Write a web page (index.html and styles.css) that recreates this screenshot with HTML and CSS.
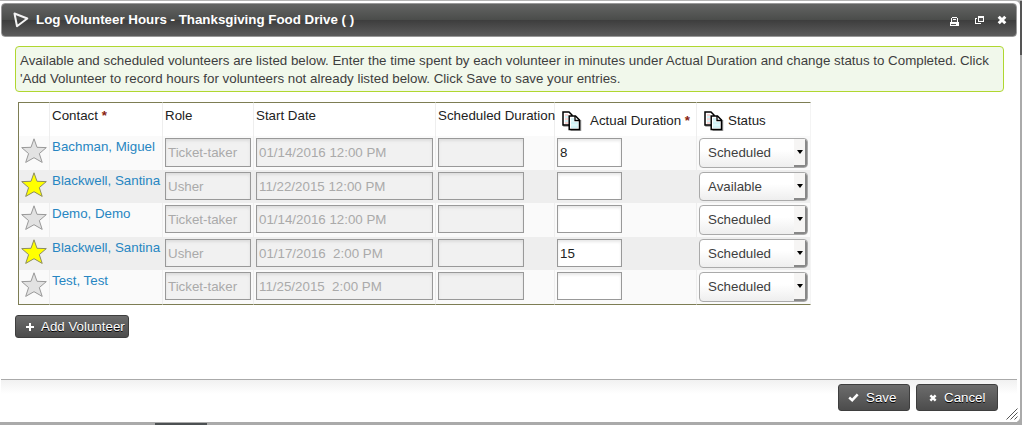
FILE: index.html
```html
<!DOCTYPE html>
<html lang="en">
<head>
<meta charset="utf-8">
<title>Log Volunteer Hours</title>
<link rel="stylesheet" href="styles.css">
</head>
<body>
<svg class="defs" width="0" height="0">
  <symbol id="star" viewBox="0 0 26 25"><path d="M13 .8 16 9.3 25.3 9.6 18.3 15.6 21.2 24.4 13 19.7 4.7 24.4 7.6 15.6 .7 9.6 10 9.3Z"/></symbol>
  <symbol id="copy" viewBox="0 0 20 20">
    <path d="M2 3v12h6M18.5 9v10.5H8.500" fill="none" stroke="#999" stroke-width="1.500"/>
    <path d="M1 1h6l3 3v10H1Z" fill="#fff" stroke="#000" stroke-width="1.500"/>
    <path d="M3 4h3M3 8h3M3 12h3" stroke="#f0aaaa"/><path d="M3 6h3M3 10h3" stroke="#a4e4ec"/>
    <path d="M7.200 5h6.300l4 4v9.500H7.200Z" fill="#fff" stroke="#000" stroke-width="1.500"/>
    <path d="M13 5v4.500h4.500" fill="none" stroke="#000" stroke-width="1.300"/>
    <path d="M9 8h3M9 12h7M9 16h7" stroke="#a4e4ec"/><path d="M9 10h3M9 14h7" stroke="#bdeef2"/>
  </symbol>
  <symbol id="cross" viewBox="0 0 10 10"><path d="M1.700 1.700 8.300 8.300M8.300 1.700 1.700 8.300" stroke="#fff" stroke-width="3"/></symbol>
</svg>
<div class="page">
  <div class="thumb"></div>
  <div class="dialog">
    <div class="titlebar">
      <svg class="logo" width="16" height="16" viewBox="0 0 16 16"><path d="M1.500 1.500 14.300 6.500 4 14.200Z" fill="none" stroke="#f3f3f3" stroke-width="2" stroke-linejoin="round"/></svg>
      <h1 class="title">Log Volunteer Hours - Thanksgiving Food Drive ( )</h1>
      <svg class="print" width="9" height="9" viewBox="0 0 9 9" shape-rendering="crispEdges"><path d="M2 0h5v1h1v4h1v4H0V5h1V1h1Z" fill="#fff"/><path d="M2 1h5v4H2ZM1 7h5v1H1Z" fill="#555"/><path d="M3 2h3v1H3Z" fill="#fff"/></svg>
      <svg class="popout" width="9" height="8" viewBox="0 0 9 8" shape-rendering="crispEdges"><path d="M3 0h6v6H3ZM0 2h2v1H1v4h4V7h1v1H0Z" fill="#fff"/><path d="M4 2h4v3H4Z" fill="#555"/></svg>
      <svg class="close" width="10" height="10"><use href="#cross"/></svg>
    </div>
    <div class="content">
      <div class="help"><div class="line l1">Available and scheduled volunteers are listed below. Enter the time spent by each volunteer in minutes under Actual Duration and change status to Completed. Click</div><div class="line">'Add Volunteer to record hours for volunteers not already listed below. Click Save to save your entries.</div></div>
      <div class="grid">
        <div class="row head">
          <div class="cell"></div><div class="cell">Contact <b class="req">*</b></div><div class="cell">Role</div><div class="cell">Start Date</div><div class="cell">Scheduled Duration</div>
          <div class="cell iconic wide"><svg width="20" height="20"><use href="#copy"/></svg><span>Actual Duration <b class="req">*</b></span></div>
          <div class="cell iconic"><svg width="20" height="20"><use href="#copy"/></svg><span>Status</span></div>
        </div>
        <div class="row tall">
          <div class="cell"><svg class="star" width="26" height="25"><use href="#star"/></svg></div><div class="cell name">Bachman, Miguel</div>
          <div class="cell"><div class="field off">Ticket-taker</div></div><div class="cell"><div class="field off">01/14/2016 12:00 PM</div></div><div class="cell"><div class="field off short"></div></div><div class="cell"><div class="field num">8</div></div><div class="cell"><div class="select">Scheduled<i class="drop"></i></div></div>
        </div>
        <div class="row even">
          <div class="cell"><svg class="star on" width="26" height="25"><use href="#star"/></svg></div><div class="cell name">Blackwell, Santina</div>
          <div class="cell"><div class="field off">Usher</div></div><div class="cell"><div class="field off">11/22/2015 12:00 PM</div></div><div class="cell"><div class="field off short"></div></div><div class="cell"><div class="field num"></div></div><div class="cell"><div class="select">Available<i class="drop"></i></div></div>
        </div>
        <div class="row mid">
          <div class="cell"><svg class="star" width="26" height="25"><use href="#star"/></svg></div><div class="cell name">Demo, Demo</div>
          <div class="cell"><div class="field off">Ticket-taker</div></div><div class="cell"><div class="field off">01/14/2016 12:00 PM</div></div><div class="cell"><div class="field off short"></div></div><div class="cell"><div class="field num"></div></div><div class="cell"><div class="select">Scheduled<i class="drop"></i></div></div>
        </div>
        <div class="row even">
          <div class="cell"><svg class="star on" width="26" height="25"><use href="#star"/></svg></div><div class="cell name">Blackwell, Santina</div>
          <div class="cell"><div class="field off">Usher</div></div><div class="cell"><div class="field off">01/17/2016&nbsp; 2:00 PM</div></div><div class="cell"><div class="field off short"></div></div><div class="cell"><div class="field num">15</div></div><div class="cell"><div class="select">Scheduled<i class="drop"></i></div></div>
        </div>
        <div class="row mid last">
          <div class="cell"><svg class="star" width="26" height="25"><use href="#star"/></svg></div><div class="cell name">Test, Test</div>
          <div class="cell"><div class="field off">Ticket-taker</div></div><div class="cell"><div class="field off">11/25/2015&nbsp; 2:00 PM</div></div><div class="cell"><div class="field off short"></div></div><div class="cell"><div class="field num"></div></div><div class="cell"><div class="select">Scheduled<i class="drop"></i></div></div>
        </div>
      </div>
      <div class="button add"><svg width="8" height="8" viewBox="0 0 8 8" shape-rendering="crispEdges"><path d="M3 0h2v3h3v2H5v3H3V5H0V3h3Z" fill="#fff"/></svg><span>Add Volunteer</span></div>
    </div>
    <div class="footer">
      <div class="button save"><svg width="11" height="9" viewBox="0 0 11 9"><path d="M1.200 4.500 4.200 7.200 9.700 1.300" fill="none" stroke="#fff" stroke-width="2.500"/></svg><span>Save</span></div>
      <div class="button cancel"><svg width="8" height="8"><use href="#cross"/></svg><span>Cancel</span></div>
    </div>
    <svg class="grip" width="12" height="12" viewBox="0 0 12 12"><path d="M.5 11.500 11.500 .5M4.500 11.500 11.500 4.500M8.500 11.500 11.500 8.500" stroke="#555" fill="none"/></svg>
  </div>
</div>
</body>
</html>
```
FILE: styles.css
```css
* { box-sizing: border-box; }
body { margin: 0; background: #a9a9a9; font: 13.33px/18px "Liberation Sans", Arial, sans-serif; color: #3e3e3e; }
.defs { position: absolute; }
.page { position: relative; width: 1022px; height: 425px; overflow: hidden; background: linear-gradient(#b5b5b5 1px, transparent 1px), linear-gradient(to right, #aaa 1020px, #555 1020px); }
.page::after { content: ""; position: absolute; right: 0; top: 55px; width: 2px; height: 370px; background: #aaa; }
.thumb { position: absolute; left: 155px; top: 423px; width: 52px; height: 2px; background: #4c5052; }
.dialog { position: relative; display: flex; flex-direction: column; width: 1020px; height: 421px; margin-top: 1px; padding: 2px 3px 0 1px; background: #fff; border-radius: 0 5px 5px 0; }
.titlebar { display: flex; align-items: center; height: 34px; flex: none; padding: 0 9px 0 11px; border: 1px solid #999; border-radius: 4px; width: 1016px; background: linear-gradient(#636463, #4b4d4b 49%, #3d3d3d 50%, #5c5c5c); }
.title { margin: 0 auto 0 7px; font-size: 13.33px; line-height: 18px; font-weight: bold; color: #fff; white-space: nowrap; }
.popout { margin-left: 16px; margin-top: -1px; }
.close { margin-left: 13px; }
.print { margin-top: 2px; }
.content { flex: 1; padding: 9px 13px 0 14px; }
.help { width: 989px; height: 46px; padding: 5px 4px; border: 1px solid #b0d730; border-radius: 4px; background: #f1f8eb; white-space: nowrap; }
.grid { width: 793px; margin: 10px 0 10px 3px; border-left: 1px solid #7d7d54; }
.row { display: grid; grid-template-columns: 31px 113px 91px 182px 119px 142px 114px; height: 33px; background: #fafafa; }
.head { height: 34px; background: #fff; color: #222; }
.tall { height: 34px; }
.mid { height: 34px; }
.last { height: 35px; }
.even { background: #eee; }
.cell { border-right: 1px solid #eee; padding: 2px; white-space: nowrap; }
.head .cell { padding-top: 4px; border-top: 1px solid #7d7d54; }
.last .cell { border-bottom: 1px solid #7d7d54; }
.cell:last-child { border-right-color: #f4f4f4; }
.req { color: #8a1f11; }
.iconic { display: flex; align-items: center; padding-left: 7px; gap: 8px; }
.iconic + .iconic { gap: 4px; }
.star { display: block; fill: #e2e2e2; stroke: #999; stroke-width: 1; }
.star.on { fill: #ff0; stroke: #8c8c60; }
.name { color: #2786c2; }
.field { height: 28px; width: 86px; padding: 5px 2px; border: 1px solid #999; background: #fff; box-shadow: inset 0 2px 3px #e8e8e8; color: #222; }
.tall .field { height: 29px; }
.cell:nth-child(4) .field { width: 177px; }
.field.off { color: #aaa; background: #f1f1f1; box-shadow: inset 0 2px 3px #ddd; }
.field.num { width: 65px; }
.select { display: flex; justify-content: space-between; height: 29px; width: 109px; padding-left: 8px; line-height: 28px; border: 1px solid #aaa; border-radius: 4px; background: linear-gradient(#fff 40%, #eee); overflow: hidden; }
.tall .select, .mid .select { height: 30px; }
.drop { width: 13px; border-right: 2px solid #888; border-bottom: 2px solid #888; background: #f6f5f4; display: flex; align-items: center; justify-content: center; }
.drop::before { content: ""; border: 3px solid transparent; border-top: 4px solid #000; border-bottom: 0; }
.button { display: flex; align-items: center; border: 1px solid #3e3e3e; border-radius: 3px; color: #fff; background: linear-gradient(#6c6c6c, #4c4c4c); text-shadow: 0 1px 0 #000; }
.add { width: 114px; height: 23px; padding-left: 10px; gap: 7px; }
.footer { display: flex; justify-content: flex-end; gap: 6px; height: 43px; flex: none; padding: 4px 19px 0 0; border-top: 1px solid #aaa; background: linear-gradient(#f1f1f1, #fff 14px); }
.footer .button { height: 27px; }
.save { width: 72px; padding-left: 9px; gap: 7px; }
.cancel { width: 82px; padding-left: 12px; gap: 7px; }
.grip { position: absolute; right: 2px; bottom: 2px; }
```
